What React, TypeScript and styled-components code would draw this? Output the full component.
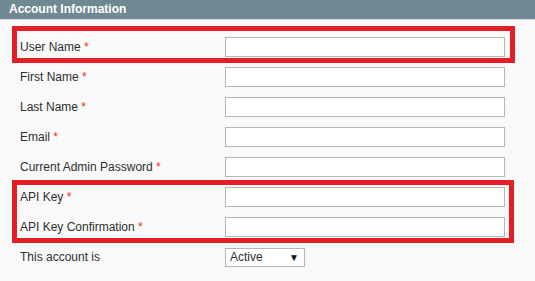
import { createGlobalStyle } from "styled-components";
import styled from "styled-components";

interface Field {
  label: string;
  required?: boolean;
}

const GlobalStyle = createGlobalStyle`
  html, body {
    margin: 0;
    padding: 0;
    background: #f9f9f9;
  }
  body {
    font-family: "Liberation Sans", Arial, sans-serif;
    font-size: 12px;
    color: #2f2f2f;
  }
`;

const mainFields: Field[] = [
  { label: "First Name", required: true },
  { label: "Last Name", required: true },
  { label: "Email", required: true },
  { label: "Current Admin Password", required: true },
];

const apiFields: Field[] = [
  { label: "API Key", required: true },
  { label: "API Key Confirmation", required: true },
];

function FieldRow({ label, required }: Field) {
  return (
    <Row>
      <Label>
        {label}
        {required && <Required> *</Required>}
      </Label>
      <TextInput type="text" />
    </Row>
  );
}

export default function App() {
  return (
    <>
      <GlobalStyle />
      <Panel>
        <Header>Account Information</Header>
        <Fieldset>
          <Highlight $top={6} $bottom={1} $right={20}>
            <FieldRow label="User Name" required />
          </Highlight>
          {mainFields.map((f) => (
            <FieldRow key={f.label} {...f} />
          ))}
          <Highlight $top={2} $bottom={1} $right={21}>
            {apiFields.map((f) => (
              <FieldRow key={f.label} {...f} />
            ))}
          </Highlight>
          <Row>
            <Label>This account is</Label>
            <Select>
              <span>Active</span>
              <Arrow>▼</Arrow>
            </Select>
          </Row>
        </Fieldset>
      </Panel>
    </>
  );
}

const Panel = styled.section`
  width: 535px;
  height: 281px;
  background: #f9f9f9;
  overflow: hidden;
`;
const Header = styled.h2`
  margin: 0;
  height: 19px;
  padding: 0 9px;
  line-height: 19px;
  font-size: 12px;
  font-weight: bold;
  color: #fff;
  background: #6f8992;
  border-bottom: 1px solid #d5dcdf;
`;
const Fieldset = styled.div`
  display: flex;
  flex-direction: column;
  padding: 12px 0 0 20px;
`;
const Highlight = styled.div<{ $top: number; $bottom: number; $right: number }>`
  position: relative;
  &::after {
    content: "";
    position: absolute;
    left: -8px;
    right: ${(p) => p.$right}px;
    top: -${(p) => p.$top}px;
    bottom: -${(p) => p.$bottom}px;
    border: 5px solid #e31e27;
    pointer-events: none;
  }
`;
const Row = styled.div`
  display: grid;
  grid-template-columns: 205px 280px;
  align-items: center;
  height: 30px;
`;
const Label = styled.label`
  font-size: 12px;
  color: #2f2f2f;
`;
const Required = styled.span`
  color: #eb340a;
`;
const TextInput = styled.input`
  box-sizing: border-box;
  width: 280px;
  height: 20px;
  margin: 0;
  padding: 0 4px;
  border: 1px solid #b6b6b6;
  background: #fff;
  font-family: inherit;
  font-size: 12px;
  outline: none;
`;
const Select = styled.div`
  box-sizing: border-box;
  display: flex;
  align-items: center;
  justify-content: space-between;
  width: 80px;
  height: 19px;
  padding: 0 4px 0 4px;
  border: 1px solid #b6b6b6;
  background: #fff;
  font-size: 12px;
  color: #2f2f2f;
`;
const Arrow = styled.span`
  font-size: 10px;
  color: #111;
  margin-right: 1px;
`;
